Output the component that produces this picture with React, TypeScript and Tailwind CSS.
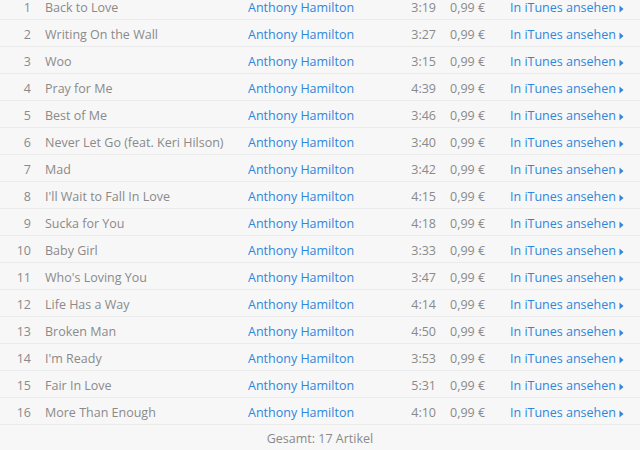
import React from "react";

const tracks: [string, string][] = [
  ["Back to Love", "3:19"],
  ["Writing On the Wall", "3:27"],
  ["Woo", "3:15"],
  ["Pray for Me", "4:39"],
  ["Best of Me", "3:46"],
  ["Never Let Go (feat. Keri Hilson)", "3:40"],
  ["Mad", "3:42"],
  ["I'll Wait to Fall In Love", "4:15"],
  ["Sucka for You", "4:18"],
  ["Baby Girl", "3:33"],
  ["Who's Loving You", "3:47"],
  ["Life Has a Way", "4:14"],
  ["Broken Man", "4:50"],
  ["I'm Ready", "3:53"],
  ["Fair In Love", "5:31"],
  ["More Than Enough", "4:10"],
];

export default function App() {
  return (
    <div
      className="w-[640px] h-[450px] overflow-hidden bg-[#f7f7f7] text-[12.5px] text-[#8a8a8a]"
      style={{ fontFamily: '"Open Sans", sans-serif' }}
    >
      <div className="-mt-[7px]">
        {tracks.map(([title, time], i) => (
          <div
            key={i}
            className="flex items-center h-[27px] pt-[5px] border-b border-[#ebebeb] whitespace-nowrap"
          >
            <span className="w-[31px] text-right">{i + 1}</span>
            <span className="ml-[14px] w-[203px]">{title}</span>
            <span className="w-[140px] text-[#2f86dc]">Anthony Hamilton</span>
            <span className="w-[48px] text-right">{time}</span>
            <span className="ml-[14px] w-[60px]">0,99 €</span>
            <span className="flex items-center text-[#2f86dc]">
              In iTunes ansehen
              <svg width="5" height="8" viewBox="0 0 5 8" className="ml-[3px]">
                <path d="M0.5 0.5 L4.5 4 L0.5 7.5 Z" fill="#2f86dc" />
              </svg>
            </span>
          </div>
        ))}
      </div>
      <div className="h-[25px] pt-[4px] flex items-center justify-center">
        Gesamt: 17 Artikel
      </div>
    </div>
  );
}
